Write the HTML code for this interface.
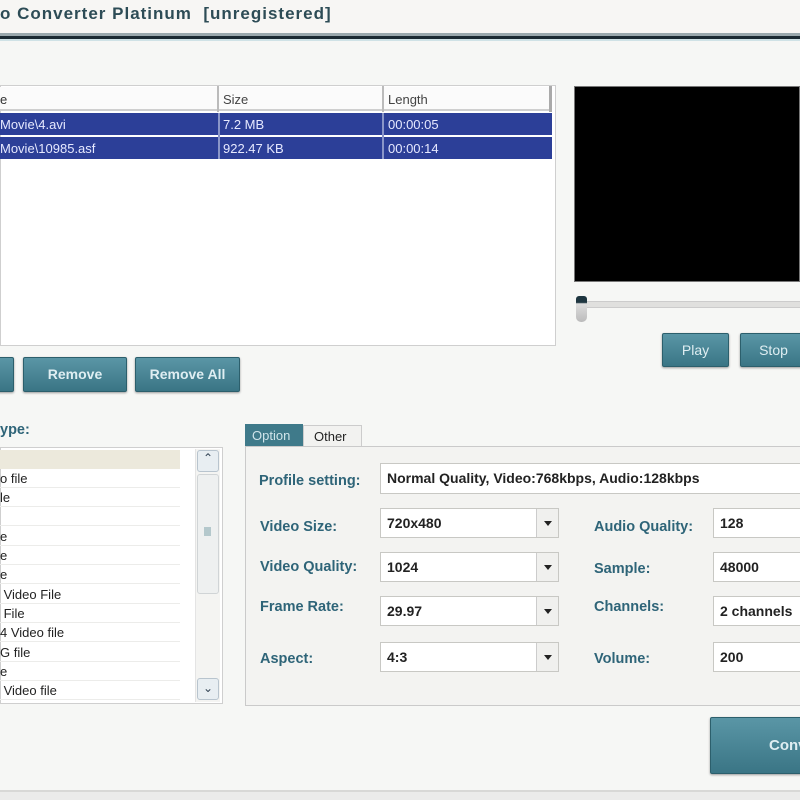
<!DOCTYPE html>
<html><head><meta charset="utf-8"><style>
*{margin:0;padding:0;box-sizing:border-box}
body{width:800px;height:800px;overflow:hidden;background:#f6f7f5;font-family:"Liberation Sans",sans-serif;position:relative}
.a{position:absolute}
.btn{position:absolute;background:linear-gradient(#5a96a6,#3a7585);border:1px solid #2c5f6c;border-radius:2px;color:#dfeef2;font-weight:bold;font-size:14px;text-align:center;box-shadow:0 1px 2px #999}
.lbl{position:absolute;color:#2e6478;font-weight:bold;font-size:14.5px}
.inp{position:absolute;background:#fff;border:1px solid #c8c8c4;font-size:14px;font-weight:bold;color:#222;padding-left:6px;line-height:28px}
.dd{position:absolute;right:0;top:0;width:22px;height:100%;background:#f0f0ee;border-left:1px solid #ccc}
.dd:after{content:"";position:absolute;left:7px;top:12px;border-left:4px solid transparent;border-right:4px solid transparent;border-top:5px solid #222}
.row{position:absolute;left:0;width:180px;height:19px;border-bottom:1px solid #ececea;font-size:13px;color:#222;line-height:19px}
.cell{position:absolute;font-size:13px;color:#e6e9ff;line-height:21px}
</style></head><body>
<div class="a" style="left:0;top:0;width:800px;height:35px;background:#f7f6f4"></div>
<div class="a" style="left:0;top:4px;font-size:17px;font-weight:bold;color:#2d4c56;letter-spacing:1px">o Converter Platinum&nbsp; [unregistered]</div>
<div class="a" style="left:0;top:33px;width:800px;height:3px;background:#9aa8ad"></div>
<div class="a" style="left:0;top:36px;width:800px;height:3px;background:#1b2a33"></div>
<div class="a" style="left:0;top:39px;width:800px;height:2px;background:#cfe2e6"></div>

<div class="a" style="left:0;top:85px;width:556px;height:261px;background:#fff;border:1px solid #cfcfcf"></div>
<div class="a" style="left:0;top:87px;width:552px;height:24px;background:#fbfbfb;border-bottom:2px solid #cfcfcf"></div>
<div class="a" style="left:0;top:92px;font-size:13px;color:#333">e</div>
<div class="a" style="left:217px;top:86px;width:2px;height:26px;background:#bbb"></div>
<div class="a" style="left:223px;top:92px;font-size:13px;color:#444">Size</div>
<div class="a" style="left:382px;top:86px;width:2px;height:26px;background:#bbb"></div>
<div class="a" style="left:388px;top:92px;font-size:13px;color:#444">Length</div>
<div class="a" style="left:549px;top:86px;width:3px;height:26px;background:#aaa"></div>
<div class="a" style="left:0;top:113px;width:552px;height:22px;background:#2c3f98"></div>
<div class="a" style="left:0;top:137px;width:552px;height:22px;background:#2c3f98"></div>
<div class="a" style="left:218px;top:113px;width:2px;height:46px;background:#8a96c8"></div>
<div class="a" style="left:382px;top:113px;width:2px;height:46px;background:#8a96c8"></div>
<div class="cell" style="left:0;top:114px">Movie\4.avi</div>
<div class="cell" style="left:223px;top:114px">7.2 MB</div>
<div class="cell" style="left:388px;top:114px">00:00:05</div>
<div class="cell" style="left:0;top:138px">Movie\10985.asf</div>
<div class="cell" style="left:223px;top:138px">922.47 KB</div>
<div class="cell" style="left:388px;top:138px">00:00:14</div>

<div class="a" style="left:574px;top:86px;width:226px;height:196px;background:#000;border:1px solid #777"></div>
<div class="a" style="left:583px;top:301px;width:217px;height:7px;background:#e0e0de;border-top:1px solid #ccc;border-bottom:1px solid #ccc"></div>
<div class="a" style="left:576px;top:296px;width:11px;height:26px;background:linear-gradient(#1e3640 25%,#ddd 30%,#bbb);border-radius:3px 3px 5px 5px"></div>
<div class="btn" style="left:662px;top:333px;width:67px;height:34px;line-height:32px;font-weight:normal">Play</div>
<div class="btn" style="left:740px;top:333px;width:67px;height:34px;line-height:32px;font-weight:normal">Stop</div>

<div class="btn" style="left:-10px;top:357px;width:24px;height:35px"></div>
<div class="btn" style="left:23px;top:357px;width:104px;height:35px;line-height:33px">Remove</div>
<div class="btn" style="left:135px;top:357px;width:105px;height:35px;line-height:33px">Remove All</div>

<div class="lbl" style="left:0;top:422px">ype:</div>
<div class="a" style="left:0;top:447px;width:223px;height:257px;background:#fff;border:1px solid #cfcfcf"></div>
<div class="a" style="left:0;top:450px;width:180px;height:19px;background:#ece9dc"></div>
<div class="row" style="top:469px">o file</div>
<div class="row" style="top:488px">le</div>
<div class="row" style="top:507px"></div>
<div class="row" style="top:527px">e</div>
<div class="row" style="top:546px">e</div>
<div class="row" style="top:565px">e</div>
<div class="row" style="top:585px">&nbsp;Video File</div>
<div class="row" style="top:604px">&nbsp;File</div>
<div class="row" style="top:623px">4 Video file</div>
<div class="row" style="top:643px">G file</div>
<div class="row" style="top:662px">e</div>
<div class="row" style="top:681px">&nbsp;Video file</div>
<div class="a" style="left:195px;top:449px;width:25px;height:253px;background:#f4f4f2;border-left:1px solid #e4e4e4"></div>
<div class="a" style="left:197px;top:450px;width:22px;height:22px;background:#e8eef2;border:1px solid #b8c4ce;border-radius:3px;font-size:12px;text-align:center;color:#345">&#8963;</div>
<div class="a" style="left:197px;top:474px;width:22px;height:120px;background:#eef0f0;border:1px solid #d0d4d6;border-radius:3px"></div>
<div class="a" style="left:204px;top:527px;width:7px;height:9px;background:#b4c8cc"></div>
<div class="a" style="left:197px;top:678px;width:22px;height:22px;background:#e8eef2;border:1px solid #b8c4ce;border-radius:3px;font-size:12px;text-align:center;color:#345;line-height:18px">&#8964;</div>

<div class="a" style="left:245px;top:424px;width:58px;height:23px;background:#3f7a8a;color:#cfe4ea;font-size:13px;line-height:23px;padding-left:7px">Option</div>
<div class="a" style="left:303px;top:425px;width:59px;height:22px;background:#f2f2f0;border:1px solid #ccc;border-bottom:none;color:#222;font-size:13px;line-height:21px;padding-left:10px">Other</div>
<div class="a" style="left:245px;top:446px;width:560px;height:260px;background:#f3f3f1;border:1px solid #cacaca"></div>
<div class="lbl" style="left:259px;top:473px">Profile setting:</div>
<div class="inp" style="left:380px;top:463px;width:430px;height:31px">Normal Quality, Video:768kbps, Audio:128kbps</div>
<div class="lbl" style="left:260px;top:519px">Video Size:</div>
<div class="lbl" style="left:260px;top:559px">Video Quality:</div>
<div class="lbl" style="left:260px;top:599px">Frame Rate:</div>
<div class="lbl" style="left:260px;top:651px">Aspect:</div>
<div class="inp" style="left:380px;top:508px;width:179px;height:30px">720x480<div class="dd"></div></div>
<div class="inp" style="left:380px;top:552px;width:179px;height:30px">1024<div class="dd"></div></div>
<div class="inp" style="left:380px;top:596px;width:179px;height:30px">29.97<div class="dd"></div></div>
<div class="inp" style="left:380px;top:642px;width:179px;height:30px">4:3<div class="dd"></div></div>
<div class="lbl" style="left:594px;top:519px">Audio Quality:</div>
<div class="lbl" style="left:594px;top:561px">Sample:</div>
<div class="lbl" style="left:594px;top:599px">Channels:</div>
<div class="lbl" style="left:594px;top:651px">Volume:</div>
<div class="inp" style="left:713px;top:508px;width:100px;height:30px">128</div>
<div class="inp" style="left:713px;top:552px;width:100px;height:30px">48000</div>
<div class="inp" style="left:713px;top:596px;width:100px;height:30px">2 channels</div>
<div class="inp" style="left:713px;top:642px;width:100px;height:30px">200</div>

<div class="btn" style="left:710px;top:717px;width:170px;height:57px;line-height:55px;font-size:15px;text-align:left;padding-left:58px">Convert</div>
<div class="a" style="left:0;top:790px;width:800px;height:2px;background:#d8d8d6"></div>
<div class="a" style="left:0;top:792px;width:800px;height:8px;background:#ebebea"></div>
</body></html>
